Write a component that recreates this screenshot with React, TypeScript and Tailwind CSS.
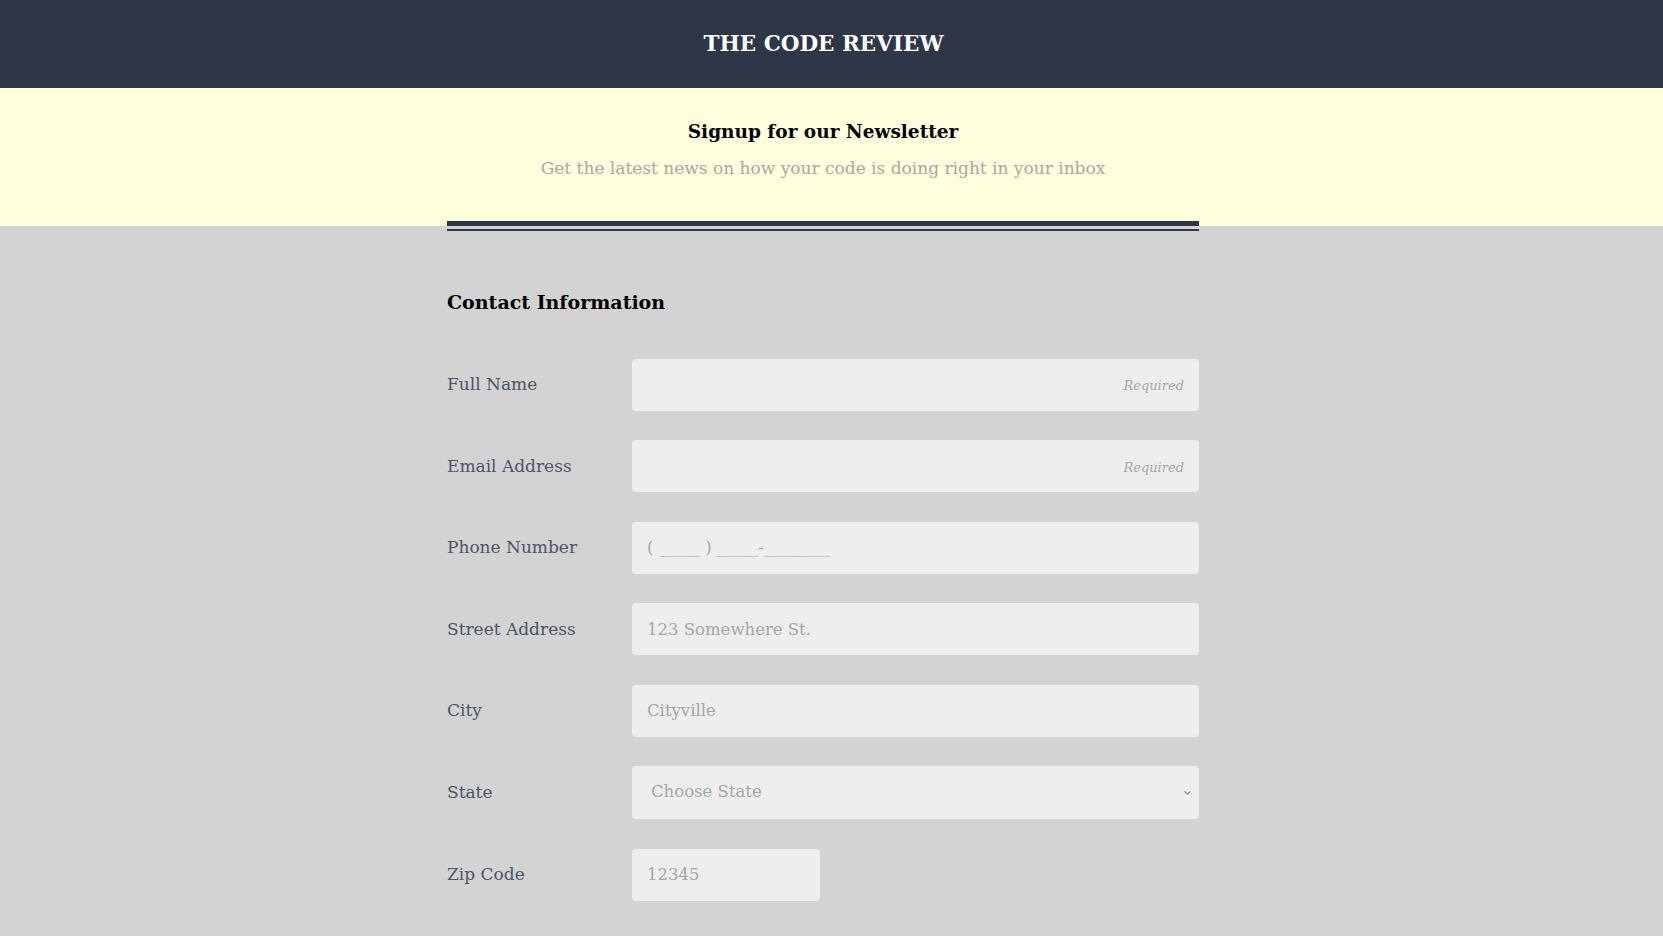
import { ChevronDown } from "lucide-react";

const serif = "font-['DejaVu_Serif','Liberation_Serif',serif]";

const inputClass =
  "h-[52px] w-full rounded-[4px] bg-[#eeeeee] px-[15px] text-[16.5px] text-[#4a5568] outline-none placeholder:text-[#a6a6a6]";

function Row({ label, children }: { label: string; children: React.ReactNode }) {
  return (
    <div className="flex items-center">
      <label className="w-[185px] shrink-0 text-[17px] text-[#4a5568]">{label}</label>
      <div className="flex-1">{children}</div>
    </div>
  );
}

export default function App() {
  return (
    <div className={`min-h-screen bg-[#d3d3d3] ${serif}`}>
      <header className="h-[88px] bg-[#2d3748]">
        <div className="flex h-full w-[1647px] items-center justify-center">
          <h1 className="text-[21.5px] font-bold text-white">THE CODE REVIEW</h1>
        </div>
      </header>

      <section className="bg-[#ffffdd]">
        <div className="ml-[447px] flex w-[752px] flex-col items-center pt-[30px]">
          <h2 className="text-[18.5px] font-bold text-black">Signup for our Newsletter</h2>
          <p className="mt-[10px] text-[17px] text-[#a8a8a8]">
            Get the latest news on how your code is doing right in your inbox
          </p>
          <div className="mt-[40px] h-[5px] w-full bg-[#2d3748]" />
        </div>
      </section>

      <main className="ml-[447px] w-[752px] pb-10">
        <div className="mt-[3px] h-[2px] w-full bg-[#2d3748]" />
        <h3 className="mt-[57px] text-[19px] font-bold text-black">Contact Information</h3>

        <form className="mt-[42px] flex flex-col gap-[29.5px]">
          <Row label="Full Name">
            <input className={`${inputClass} placeholder:text-right placeholder:text-[13px] placeholder:italic`} placeholder="Required" />
          </Row>
          <Row label="Email Address">
            <input className={`${inputClass} placeholder:text-right placeholder:text-[13px] placeholder:italic`} placeholder="Required" />
          </Row>
          <Row label="Phone Number">
            <input className={inputClass} placeholder="( _____ ) _____-________" />
          </Row>
          <Row label="Street Address">
            <input className={inputClass} placeholder="123 Somewhere St." />
          </Row>
          <Row label="City">
            <input className={inputClass} placeholder="Cityville" />
          </Row>
          <Row label="State">
            <div className="relative">
              <select
                defaultValue=""
                className="h-[53px] w-full appearance-none rounded-[4px] bg-[#eeeeee] px-[19px] text-[16.5px] text-[#a6a6a6] outline-none"
              >
                <option value="" disabled>
                  Choose State
                </option>
              </select>
              <ChevronDown
                className="pointer-events-none absolute right-[6px] top-1/2 h-[11px] w-[11px] -translate-y-1/2 text-[#999999]"
                strokeWidth={3}
              />
            </div>
          </Row>
          <Row label="Zip Code">
            <input className={`${inputClass} !w-[188px]`} placeholder="12345" />
          </Row>
        </form>
      </main>
    </div>
  );
}
